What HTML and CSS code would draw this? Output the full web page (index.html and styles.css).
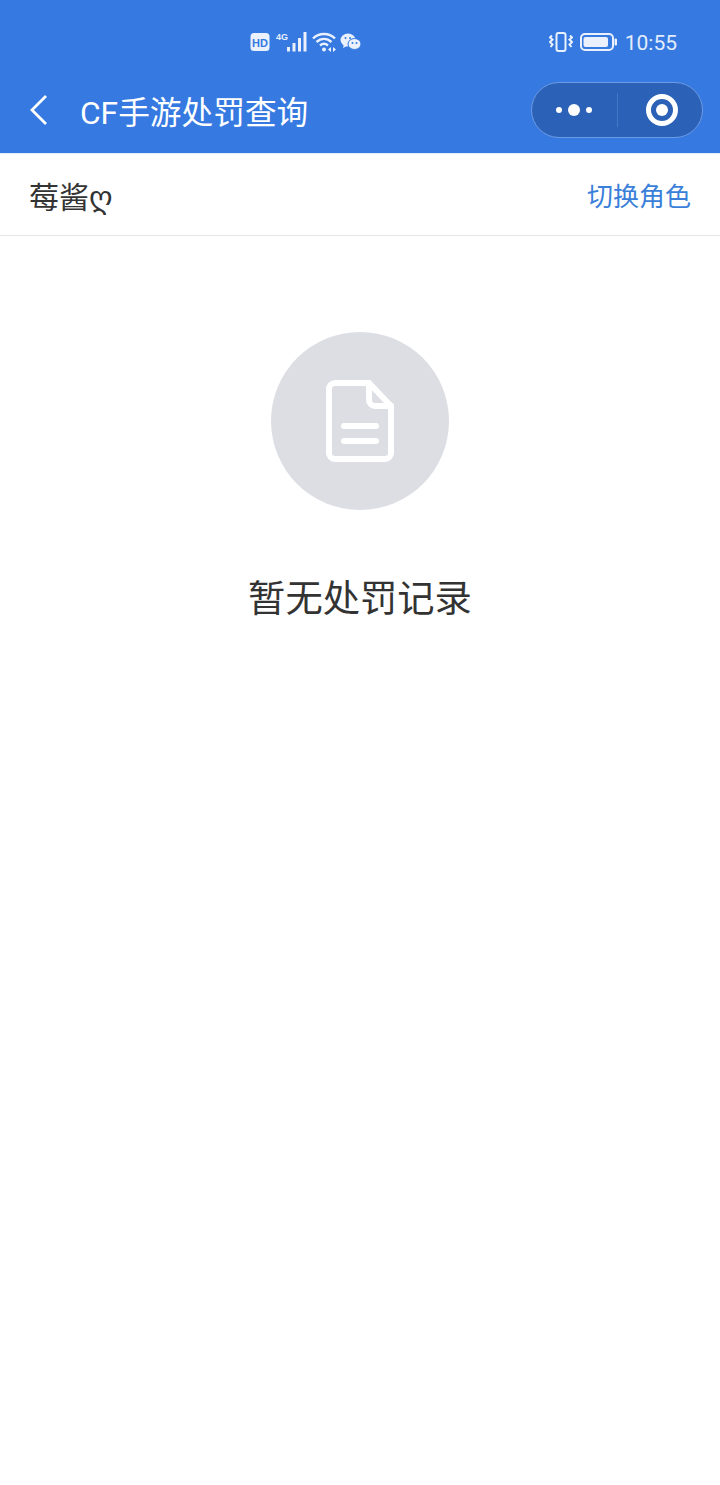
FILE: index.html
```html
<!DOCTYPE html>
<html lang="zh-CN">
<head>
    <meta charset="UTF-8">
    <meta name="viewport" content="width=device-width, initial-scale=1.0">
    <title>CF手游处罚查询</title>
    <link rel="stylesheet" href="styles.css">
</head>
<body>
    <header class="header">
        <div class="status-bar">
            <div class="status-left">
                <svg class="icon-hd" width="20" height="20" viewBox="0 0 20 20">
                    <rect x="0.5" y="1" width="19" height="18" rx="3.5" fill="#eaf1fc"/>
                    <text x="10" y="14.5" text-anchor="middle" class="hd-text">HD</text>
                </svg>
                <svg class="icon-signal" width="34" height="22" viewBox="0 0 34 22">
                    <text x="3" y="8.500" class="net-text">4G</text>
                    <rect x="14" y="16" width="3" height="4.500" fill="#eaf1fc"/>
                    <rect x="19.500" y="12" width="3" height="8.500" fill="#eaf1fc"/>
                    <rect x="25" y="7" width="3" height="13.500" fill="#eaf1fc"/>
                    <rect x="30.500" y="1" width="3" height="19.500" fill="#eaf1fc"/>
                </svg>
                <svg class="icon-wifi" width="26" height="22" viewBox="-3 0 26 22" fill="none" stroke="#eaf1fc" stroke-width="2.400">
                    <path d="M0 7.500C6 1.500 16 1.500 22 7.500"/>
                    <path d="M3.500 11C8 6.800 14 6.800 18.500 11"/>
                    <path d="M7 14.500C9.500 12.300 12.500 12.300 15 14.500"/>
                    <circle cx="11" cy="18.500" r="2" fill="#eaf1fc" stroke="none"/>
                    <path d="M15 18.500l3-2.500v5zM23 18.500l-3-2.500v5z" fill="#eaf1fc" stroke="none"/>
                </svg>
                <svg class="icon-wechat" width="23" height="20" viewBox="-1 0 23 20">
                    <ellipse cx="8" cy="8" rx="7.500" ry="6.500" fill="#eaf1fc"/>
                    <path d="M4 12l-1 4 4-2z" fill="#eaf1fc"/>
                    <ellipse cx="14.500" cy="12" rx="6.500" ry="5.500" fill="#eaf1fc" stroke="#3579e1"/>
                    <circle cx="12.500" cy="11" r="1" fill="#3579e1"/>
                    <circle cx="16.500" cy="11" r="1" fill="#3579e1"/>
                    <circle cx="5.500" cy="6" r="1" fill="#3579e1"/>
                    <circle cx="10" cy="6" r="1" fill="#3579e1"/>
                </svg>
            </div>
            <div class="status-right">
                <svg class="icon-vibrate" width="24" height="20" viewBox="0 0 24 20" fill="none" stroke="#eaf1fc" stroke-width="2">
                    <rect x="7.500" y="1" width="9" height="18" rx="2"/>
                    <path d="M3 3.500l-2 2 2.500 2-2.500 2.500 2.500 2.500-2 2.500"/>
                    <path d="M21 3.500l2 2-2.500 2 2.500 2.500-2.500 2.500 2 2.500"/>
                </svg>
                <svg class="icon-battery" width="38" height="20" viewBox="0 0 38 20">
                    <rect x="1" y="2" width="32" height="16" rx="4" fill="none" stroke="#eaf1fc" stroke-width="2"/>
                    <rect x="3.500" y="5" width="24.500" height="10" rx="2" fill="#eaf1fc"/>
                    <rect x="34.500" y="6.500" width="2.500" height="7" rx="1" fill="#eaf1fc"/>
                </svg>
                <span class="clock">10:55</span>
            </div>
        </div>
        <div class="nav-bar">
            <svg class="back-icon" width="20" height="32" viewBox="0 0 20 32" fill="none" stroke="#fff" stroke-width="2.800">
                <path d="M17 2L3 16l14 14"/>
            </svg>
            <h1 class="nav-title">CF手游处罚查询</h1>
            <div class="capsule">
                <div class="capsule-part">
                    <span class="dot"></span>
                    <span class="dot dot-big"></span>
                    <span class="dot"></span>
                </div>
                <div class="capsule-line"></div>
                <div class="capsule-part">
                    <span class="target"><span class="target-core"></span></span>
                </div>
            </div>
        </div>
    </header>

    <div class="role-row">
        <span class="role-name">莓酱ღ</span>
        <span class="role-switch">切换角色</span>
    </div>

    <main class="empty">
        <div class="empty-circle">
            <svg width="68" height="82" viewBox="0 0 68 82" fill="none" stroke="#fff" stroke-width="6" stroke-linejoin="round" stroke-linecap="round">
                <path d="M9 3H43L65 26V73a6 6 0 0 1-6 6H9a6 6 0 0 1-6-6V9a6 6 0 0 1 6-6z"/>
                <path d="M43 3V20a6 6 0 0 0 6 6H65"/>
                <path d="M18 46H50"/>
                <path d="M18 61H50"/>
            </svg>
        </div>
        <p class="empty-text">暂无处罚记录</p>
    </main>
</body>
</html>
```

FILE: styles.css
```css
body {
    font-family: Roboto, "Noto Sans CJK SC", sans-serif;
    margin: 0;
    padding: 0;
    background: #ffffff;
    color: #333333;
}

.header {
    height: 153px;
    background: #3579e1;
    border-bottom: 1px solid #e6ecf5;
    box-sizing: content-box;
}

.status-bar {
    display: flex;
    align-items: center;
    justify-content: flex-end;
    height: 84px;
    margin-bottom: -15px;
    padding-right: 43px;
    box-sizing: border-box;
    position: relative;
}

.status-left {
    position: absolute;
    left: 250px;
    top: 31px;
    display: flex;
    align-items: center;
    gap: 3px;
}

.hd-text {
    font: bold 11px "Liberation Sans", sans-serif;
    fill: #3579e1;
}

.net-text {
    font: bold 9px "Liberation Sans", sans-serif;
    fill: #eaf1fc;
}

.status-right {
    display: flex;
    align-items: center;
    gap: 7px;
}

.clock {
    font-size: 21px;
    color: #e3edfb;
    margin-top: 2px;
}

.nav-bar {
    display: flex;
    align-items: center;
    height: 81px;
    padding: 0 17px 0 29px;
}

.back-icon {
    margin-right: 31px;
}

.nav-title {
    flex: 1;
    margin: 0;
    font-size: 31.7px;
    font-weight: 400;
    color: #ffffff;
}

.capsule {
    display: flex;
    align-items: center;
    width: 172px;
    height: 56px;
    box-sizing: border-box;
    background: #2b62b7;
    border: 1px solid #6d9be3;
    border-radius: 28px;
}

.capsule-part {
    flex: 1;
    display: flex;
    align-items: center;
    justify-content: center;
    gap: 6px;
}

.capsule-line {
    width: 1px;
    height: 34px;
    background: #4477c6;
}

.dot {
    width: 6px;
    height: 6px;
    border-radius: 50%;
    background: #ffffff;
}

.dot-big {
    width: 12px;
    height: 12px;
}

.target {
    display: flex;
    align-items: center;
    justify-content: center;
    width: 32px;
    height: 32px;
    margin-left: 4px;
    box-sizing: border-box;
    border: 5px solid #ffffff;
    border-radius: 50%;
}

.target-core {
    width: 12px;
    height: 12px;
    border-radius: 50%;
    background: #ffffff;
}

.role-row {
    display: flex;
    align-items: center;
    justify-content: space-between;
    height: 81px;
    padding: 0 29px;
    border-bottom: 1px solid #e5e5e5;
}

.role-name {
    font-size: 30px;
    font-family: "Noto Sans CJK SC", "DejaVu Sans", sans-serif;
    color: #333333;
}

.role-switch {
    font-size: 26px;
    color: #3a7fd9;
}

.empty {
    display: flex;
    flex-direction: column;
    align-items: center;
    padding-top: 96px;
}

.empty-circle {
    display: flex;
    align-items: center;
    justify-content: center;
    width: 178px;
    height: 178px;
    border-radius: 50%;
    background: #dddee4;
}

.empty-text {
    margin: 61px 0 0;
    font-size: 37.3px;
    line-height: 56px;
    color: #333333;
}
```
